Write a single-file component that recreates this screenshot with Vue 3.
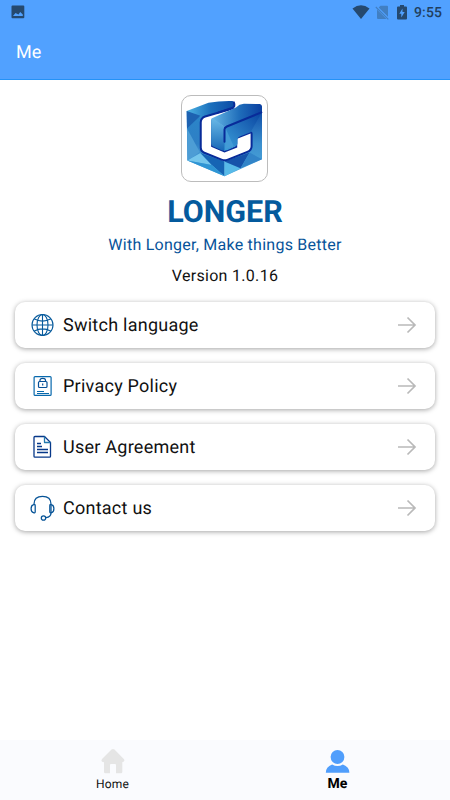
<script setup>
const items = [
  { label: 'Switch language', icon: 'globe' },
  { label: 'Privacy Policy', icon: 'privacy' },
  { label: 'User Agreement', icon: 'document' },
  { label: 'Contact us', icon: 'headset' },
]
</script>

<template>
  <div class="screen">
    <header class="header">
      <div class="status">
        <svg class="picture" viewBox="0 0 14 14" width="14" height="14"><path fill="#25496f" fill-rule="evenodd" d="M1.500.5h10.800q1 0 1 1v10.800q0 1-1 1H1.500q-1 0-1-1V1.500q0-1 1-1zM2 11h9.800V9.500L9.200 7 7.500 9.500 4.500 8z" /></svg>
        <div class="indicators">
          <svg viewBox="0 0 18 14" width="18" height="14"><path fill="#25496f" d="M.5 3.500Q9-3 17.500 3.500L9 14z" /></svg>
          <svg class="sim" viewBox="0 0 14 15" width="14" height="15"><path fill="#417fc2" d="M5.500.8H12q1 0 1 1v10L3.700 2.500zM2 4.500 11.500 14H3q-1 0-1-1z" /><path d="m.8 2 12.500 12.300" stroke="#417fc2" stroke-width="1.100" /></svg>
          <svg class="battery" viewBox="0 0 10 15" width="10" height="15"><path fill="#25496f" fill-rule="evenodd" d="M3 0h4v1.500h2q1 0 1 1v11q0 1-1 1H1q-1 0-1-1v-11q0-1 1-1h2zM5.500 3.500 2.300 8.700h2V12.500l3.400-5.600h-2.200z" /></svg>
          <span class="time">9:55</span>
        </div>
      </div>
      <h1 class="title">Me</h1>
    </header>

    <main class="content">
      <div class="logo">
        <svg viewBox="20 15 260 260" width="87" height="87">
          <defs>
            <linearGradient id="left" x1="0" y1="0" x2="0" y2="1"><stop stop-color="#2a86c9" /><stop offset=".5" stop-color="#2e7fc5" /><stop offset="1" stop-color="#6ac0ea" /></linearGradient>
            <linearGradient id="top"><stop stop-color="#4db4e4" /><stop offset=".5" stop-color="#1b6fbc" /><stop offset="1" stop-color="#0c4ba6" /></linearGradient>
            <linearGradient id="right" x1="0" y1="0" x2="0" y2="1"><stop stop-color="#0d4ba6" /><stop offset=".5" stop-color="#3b8fce" /><stop offset="1" stop-color="#4fa9dc" /></linearGradient>
            <linearGradient id="innerTop"><stop stop-color="#68b8e6" /><stop offset=".55" stop-color="#1f6dba" /><stop offset="1" stop-color="#0a3fa0" /></linearGradient>
            <linearGradient id="innerLeft" x1="0" y1="0" x2="0" y2="1"><stop stop-color="#68b8e6" /><stop offset="1" stop-color="#1868b7" /></linearGradient>
            <linearGradient id="front" x1="0" y1="1" x2="1" y2="0"><stop stop-color="#3ba0da" /><stop offset=".5" stop-color="#2371bd" /><stop offset="1" stop-color="#0844a1" /></linearGradient>
          </defs>
          <path fill="url(#left)" d="M37 63 84 72V184l66 30v44L39 211z" />
          <path fill="url(#top)" d="m37 63 65-25q35-6 72-5 8 5 6 15-2 7-10 9l-90 27z" />
          <path fill="url(#right)" d="m262 62v145l-112 51v-46l74-31v-56z" />
          <path fill="#75c6ec" d="m39 211 39-23 34 36z" />
          <path fill="#1664b4" d="m78 188 72 26v44l-38-34z" />
          <path fill="#2f95d4" d="m39 211 73 13 38 34z" />
          <path fill="#58bae8" d="m150 214 48 20-48 24z" />
          <path fill="#1653aa" d="m150 214 75-27-27 47z" />
          <path fill="#3284c8" d="m225 187 37 20-64 27z" />
          <path fill="#4d9dd5" d="m38 115 38 70-37 26z" />
          <path fill="#1d62b1" d="m37 63 41 14-40 38z" />
          <path fill="#fff" stroke="#082b99" stroke-width="12" stroke-linejoin="round" d="M173 59 93 82q-11 4-11 15v76q0 8 7 11l55 22q7 2 13 0l60-24q11-4 11-14v-38l-40 16v26l-38 15-40-17V88z" />
          <path fill="#fff" d="M173 59 93 82q-11 4-11 15v76q0 8 7 11l55 22q7 2 13 0l60-24q11-4 11-14v-38l-40 16v26l-38 15-40-17V90l65-25z" />
          <path fill="#fff" d="M171 58q8 3 11-12l8-1-5 15-66 31z" />
          <path fill="url(#innerTop)" d="m111 85 73-33q10-10 24-11l48 1q7 2 6 9v15l-112 45z" />
          <path fill="url(#innerLeft)" d="M110 88q0-4 7-2l35 25v70q-10 1-16-3l-20-9q-6-3-6-9z" />
          <path fill="url(#front)" d="m150 111 112-45-34 60-31 12q-8 3-8 10v12q0 6-7 9l-19 9q-6 3-13 3z" />
          <path fill="#439bd6" d="m152 112 26 57-26 8z" />
          <path fill="none" stroke="#082b99" stroke-width="6" stroke-linecap="round" stroke-linejoin="round" d="M150 155v-37q0-6 7-9l103-42" />
          <path fill="none" stroke="#082b99" stroke-width="6" stroke-linecap="round" d="M178 37q5 12-5 17l-41 13" />
        </svg>
      </div>
      <div class="brand">LONGER</div>
      <div class="slogan">With Longer, Make things Better</div>
      <div class="version">Version 1.0.16</div>

      <nav class="list">
        <div v-for="item in items" :key="item.icon" class="card">
          <svg v-if="item.icon === 'globe'" class="icon" viewBox="0 0 26 26" width="26" height="26">
            <g fill="none" stroke="#075a9c" stroke-width="1.100"><circle cx="12.500" cy="13" r="10.500" /><ellipse cx="12.500" cy="13" rx="5.500" ry="10.500" /><path d="M12.500 2.500v21M2 13h21M4 6.800Q12.500 11.500 21 6.800M4 19.200Q12.500 14.500 21 19.200" /></g>
          </svg>
          <svg v-else-if="item.icon === 'privacy'" class="icon" viewBox="0.500 0 26 26" width="26" height="26">
            <g fill="none" stroke="#0869ad" stroke-width="1.200"><rect x="4.600" y="3.600" width="17" height="18.800" rx="1" /><rect x="9" y="8.500" width="8.500" height="6" rx="1" stroke="#075097" /><path stroke="#075097" d="M10.500 8.500V7.200q0-1.900 2.700-1.900T16 7.200v1.300M13.200 10.500v2" /><path d="M7.500 18.500h7M7.500 20.500h12" /></g>
          </svg>
          <svg v-else-if="item.icon === 'document'" class="icon" viewBox="0 0 26 26" width="26" height="26">
            <g fill="none" stroke="#073889" stroke-width="1.300" stroke-linejoin="round"><path d="M5 2.500H14.500l6 6V22.200q0 1-1 1H5q-1 0-1-1V3.500q0-1 1-1z" /><path stroke="#2379ad" d="M14.500 2.500v6h6" /><path d="M7 9.500h4M7 12.500h5M7 15.500H18M7 18.500H18" /></g>
          </svg>
          <svg v-else class="icon" viewBox="0.500 0 26 26" width="26" height="26">
            <g fill="none" stroke="#075497" stroke-width="1.250"><path d="M4.500 10V9Q4.500 1.300 13 1.300T21.500 9v9q0 4-5 4.600" /><path d="M4 9.700q1.700-.6 1.700 1v6q0 1.700-1.700 1Q1.600 17 1.600 13.700T4 9.700zM22 9.700q-1.700-.6-1.700 1v6q0 1.700 1.700 1 2.400-.7 2.400-4T22 9.700z" /><circle cx="14" cy="23" r="2.200" /></g>
          </svg>
          <span class="label">{{ item.label }}</span>
          <svg class="arrow" viewBox="0 0 20 18" width="20" height="18"><path d="M1 9h17M10.500 1.500 18 9l-7.500 7.500" fill="none" stroke="#b9b9b9" stroke-width="1.700" /></svg>
        </div>
      </nav>
    </main>

    <footer class="tabs">
      <div class="tab">
        <svg viewBox="0 0 26 26" width="26" height="26"><path fill="#e5e5e5" d="M11.500 1.600q1.500-1.300 3 0l9.300 9.400q1.800 2.500-1.500 3.200V24q0 1.300-1.300 1.300h-5V17q0-1-1-1h-4q-1 0-1 1v8.300H5.300Q4 25.300 4 24v-9.800Q.2 14 2 11z" /></svg>
        <span>Home</span>
      </div>
      <div class="tab active">
        <svg viewBox="0 0 26 26" width="26" height="26"><circle cx="12.500" cy="9" r="6.900" fill="#509efc" /><path fill="#509efc" d="M.8 24.800q0-6 6.300-8.300 5.400 3.200 10.800 0 6.500 2.300 6.500 8.300z" /></svg>
        <span>Me</span>
      </div>
    </footer>
  </div>
</template>

<style>
body { margin: 0; background: #fff; }
</style>

<style scoped>
.screen { box-sizing: border-box; width: 450px; height: 800px; display: flex; flex-direction: column; overflow: hidden; background: #fff; font-family: Roboto, sans-serif; color: #111; text-rendering: geometricPrecision; }
.header { box-sizing: border-box; height: 80px; flex: none; background: #51a1ff; border-bottom: 1px solid #2492f7; }
.status { display: flex; justify-content: space-between; height: 25px; padding: 0 8px 0 11px; }
.picture { margin-top: 5px; }
.indicators { display: flex; align-items: flex-start; padding-top: 5px; }
.sim { margin-left: 5px; }
.battery { margin-left: 8px; }
.time { margin-left: 7px; font-size: 14px; line-height: 17px; font-weight: 500; color: #213f60; letter-spacing: .1px; }
.title { margin: 16px 0 0 16px; font-size: 18px; line-height: 24px; font-weight: 400; color: #fff; }
.content { flex: 1; padding: 15px 15px 0; display: flex; flex-direction: column; align-items: center; }
.logo { box-sizing: border-box; width: 87px; height: 87px; margin-right: 1px; border: 1px solid #bcbcbc; border-radius: 10px; overflow: hidden; display: flex; align-items: center; justify-content: center; }
.logo svg { flex: none; }
.brand { margin-top: 13px; font-size: 30.500px; line-height: 36px; font-weight: 700; color: #045a9d; }
.slogan { margin-top: 4px; font-size: 16px; line-height: 20px; letter-spacing: .25px; color: #07539a; }
.version { margin-top: 11px; font-size: 16px; line-height: 20px; letter-spacing: .3px; }
.list { width: 100%; margin-top: 16px; display: flex; flex-direction: column; gap: 15px; }
.card { box-sizing: border-box; height: 46px; padding: 0 18px 0 15px; display: flex; align-items: center; border-radius: 10px; background: #fff; box-shadow: 0 1px 5px rgba(0, 0, 0, .36); }
.label { margin-left: 7px; padding-top: 2px; font-size: 18px; line-height: 22px; letter-spacing: .25px; }
.arrow { margin-left: auto; }
.tabs { height: 60px; flex: none; display: flex; background: #fafbfe; }
.tab { flex: 1; padding-top: 8px; display: flex; flex-direction: column; align-items: center; font-size: 12px; line-height: 16px; letter-spacing: .2px; }
.tab span { margin-top: 2px; }
.active { font-size: 14px; font-weight: 700; color: #000; }
</style>
